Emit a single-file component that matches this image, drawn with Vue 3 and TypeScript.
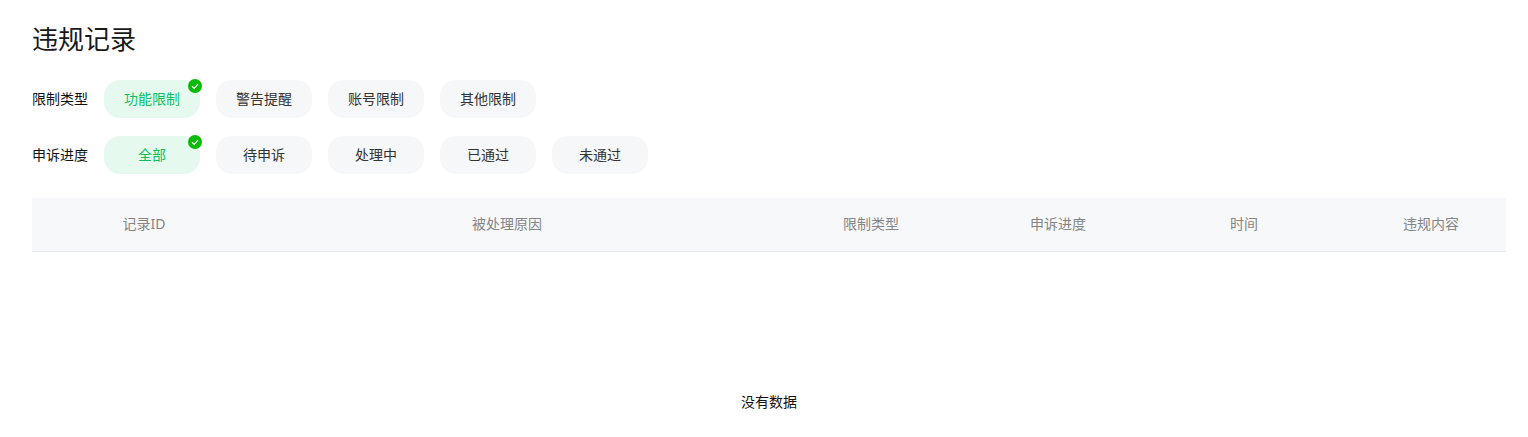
<template>
  <div class="page">
    <h1 class="title">违规记录</h1>

    <div v-for="group in filters" :key="group.label" class="filter-row">
      <span class="filter-label">{{ group.label }}</span>
      <div class="pills">
        <div
          v-for="(option, index) in group.options"
          :key="option"
          class="pill"
          :class="{ active: index === 0 }"
        >
          {{ option }}
          <svg v-if="index === 0" class="check" viewBox="0 0 14 14" aria-hidden="true">
            <circle cx="7" cy="7" r="7" fill="#09bb07" />
            <path d="M4 7.2 6.2 9.3 10 5.2" fill="none" stroke="#fff" stroke-width="1.2" />
          </svg>
        </div>
      </div>
    </div>

    <div class="table-head">
      <div v-for="col in columns" :key="col" class="cell">{{ col }}</div>
    </div>
    <div class="empty">没有数据</div>
  </div>
</template>

<script setup lang="ts">
interface FilterGroup {
  label: string
  options: string[]
}

const filters: FilterGroup[] = [
  { label: '限制类型', options: ['功能限制', '警告提醒', '账号限制', '其他限制'] },
  { label: '申诉进度', options: ['全部', '待申诉', '处理中', '已通过', '未通过'] }
]

const columns = ['记录ID', '被处理原因', '限制类型', '申诉进度', '时间', '违规内容']
</script>

<style>
html,
body {
  background: #fff;
}
</style>

<style scoped>
.page {
  padding: 20px 22px 0 32px;
  font-family: "Noto Sans", "Noto Sans CJK SC", sans-serif;
  font-size: 14px;
  color: #111;
}

.title {
  margin: 0 0 22px;
  font-size: 26px;
  font-weight: 400;
  line-height: 38px;
  color: #191919;
}

.filter-row {
  display: flex;
  align-items: center;
  gap: 16px;
  margin-bottom: 18px;
}

.filter-label {
  width: 56px;
  line-height: 38px;
}

.pills {
  display: flex;
  gap: 16px;
}

.pill {
  position: relative;
  width: 96px;
  height: 38px;
  line-height: 38px;
  text-align: center;
  border-radius: 16px;
  background: #f6f7f9;
  color: #333;
}

.pill.active {
  background: #e6f9ef;
  color: #07c160;
}

.check {
  position: absolute;
  top: -1px;
  right: -2px;
  width: 14px;
  height: 14px;
}

.table-head {
  display: grid;
  grid-template-columns: 224px 502px 226px 148px 224px 150px;
  height: 54px;
  margin-top: 24px;
  box-sizing: border-box;
  background: #f7f8fa;
  border-bottom: 1px solid #e5e6e8;
}

.cell {
  line-height: 51px;
  text-align: center;
  color: #858585;
}

.empty {
  margin-top: 139px;
  line-height: 22px;
  text-align: center;
  color: #111;
}
</style>
